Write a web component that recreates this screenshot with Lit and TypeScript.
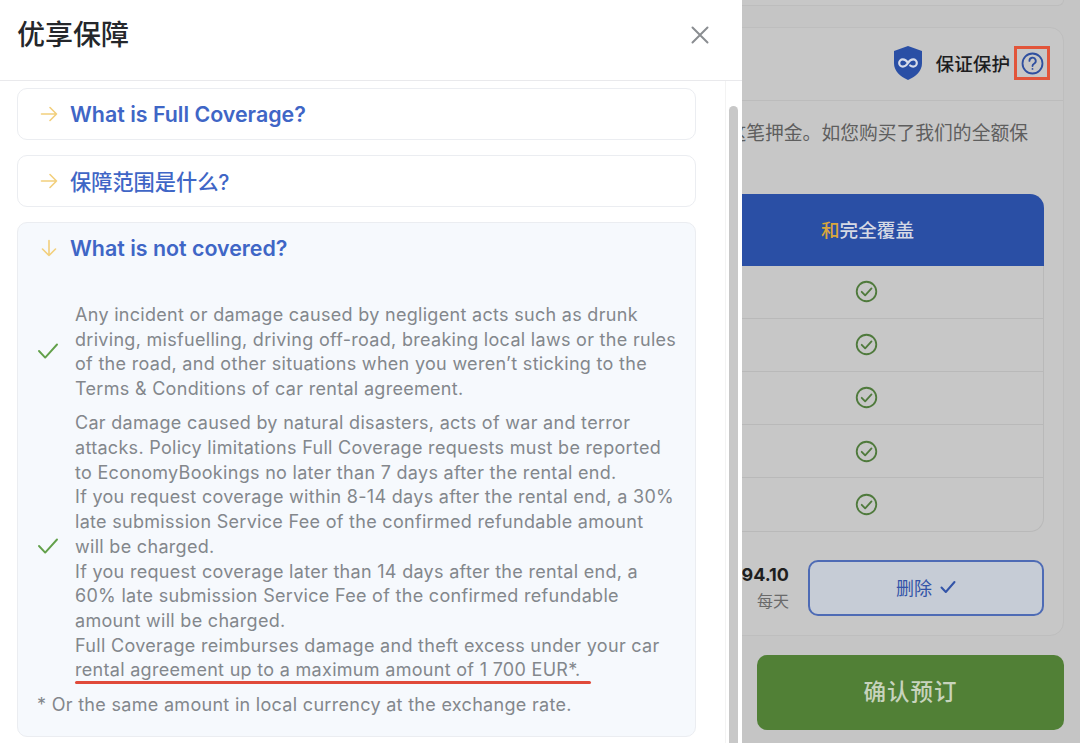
import { LitElement, html, css } from "lit";
import { customElement } from "lit/decorators.js";

const arrowRight = html`<svg class="arrow" viewBox="0 0 18 18" fill="none" stroke="#f2cf7c" stroke-width="1.6" stroke-linecap="round" stroke-linejoin="round"><path d="M1.5 9H16.5M10 2.5 16.5 9 10 15.5"/></svg>`;
const arrowDown = html`<svg class="arrow" viewBox="0 0 18 18" fill="none" stroke="#f2cf7c" stroke-width="1.6" stroke-linecap="round" stroke-linejoin="round"><path d="M9 1.5V16.5M2.5 10 9 16.5 15.5 10"/></svg>`;
const check = html`<svg class="check" viewBox="0 0 20 16" fill="none" stroke="#62a04a" stroke-width="1.9" stroke-linecap="round" stroke-linejoin="round"><path d="M1 8 7.2 14.6 19 1.5"/></svg>`;
const circleCheck = html`<svg class="circle-check" viewBox="0 0 24 24" fill="none" stroke="#4f7a3c" stroke-width="1.9" stroke-linecap="round" stroke-linejoin="round"><circle cx="12" cy="12" r="10.2"/><path d="M7 12.3 10.6 16 17.2 8.8"/></svg>`;

@customElement("app-root")
export class AppRoot extends LitElement {
  static styles = css`
    :host { display: block; width: 1080px; height: 743px; position: relative; overflow: hidden; background: #c5c5c5; font-family: Inter, "Noto Sans CJK SC", sans-serif; }
    * { box-sizing: border-box; }

    /* page behind the drawer */
    .page { width: 1080px; height: 743px; display: flex; flex-direction: column; align-items: flex-end; padding-right: 16px; }
    .top-card { width: 400px; height: 6px; flex: none; border: 1px solid #bdbdbd; border-top: 0; border-radius: 0 0 12px 12px; background: #c7c7c7; }
    .card { width: 400px; height: 609px; flex: none; margin-top: 21px; background: #c7c7c7; border: 1px solid #bebebe; border-radius: 14px; display: flex; flex-direction: column; }
    .card-head { height: 73px; flex: none; border-bottom: 1px solid #bcbcbc; display: flex; align-items: center; justify-content: flex-end; padding: 0 13px 2px 0; }
    .shield { width: 30px; height: 34px; margin-right: 13px; }
    .head-label { font-size: 18.6px; font-weight: 500; color: #1d1d1f; margin: 0 4px 2px 0; }
    .qbox { width: 36px; height: 34px; border: 3px solid #e2553a; display: flex; align-items: center; justify-content: center; }
    .qbox svg { width: 23px; height: 23px; }
    .desc { font-size: 18.8px; color: #5e5e5e; margin-top: 20px; height: 26px; line-height: 26px; white-space: nowrap; text-align: right; padding-right: 35px; overflow: hidden; }
    .table { margin: 47px 19px 0 0; flex: none; }
    .thead { height: 71.5px; background: #2a4fa5; border-radius: 0 14px 0 0; display: flex; align-items: center; justify-content: flex-end; padding: 0 130px 3px 0; font-size: 18.6px; font-weight: 500; color: #d5d9e4; }
    .thead b { color: #d9a63d; font-weight: 500; }
    .rows { border: 1px solid #b9b9b9; border-top: 0; border-radius: 0 0 14px 0; }
    .row { height: 53.2px; display: flex; align-items: center; justify-content: flex-end; padding-right: 165px; border-bottom: 1px solid #b9b9b9; }
    .row:last-child { border-bottom: 0; }
    .circle-check { width: 23px; height: 23px; }
    .price-row { display: flex; justify-content: flex-end; align-items: center; margin: 28px 19px 0 0; gap: 19px; }
    .price { text-align: right; }
    .amount { font-size: 18px; font-weight: 700; color: #1f1f1f; line-height: 26px; }
    .per { font-size: 16px; color: #6a6a6a; line-height: 26px; }
    .remove { width: 236px; height: 56px; border: 2px solid #4e6bb5; border-radius: 10px; background: #c6ccd6; display: flex; align-items: center; justify-content: center; gap: 8px; padding-bottom: 2px; font-size: 18px; color: #3354a8; }
    .remove svg { width: 16px; height: 14px; }
    .confirm { width: 307px; height: 75px; flex: none; margin-top: 19px; padding-bottom: 5px; background: #518036; border-radius: 10px; display: flex; align-items: center; justify-content: center; font-size: 22.5px; font-weight: 500; letter-spacing: 1px; color: #c7d3bd; }

    /* drawer */
    .drawer { position: absolute; left: 0; top: 0; bottom: 0; width: 742px; background: #fff; display: flex; flex-direction: column; }
    .drawer-head { height: 81px; flex: none; border-bottom: 1px solid #e9e9ec; display: flex; align-items: center; justify-content: space-between; padding: 0 33px 14px 17px; }
    .drawer-head h1 { margin: 0; font-size: 28px; font-weight: 500; color: #25272b; }
    .close { width: 18px; height: 18px; display: block; margin-top: 3px; }
    .body { flex: 1; display: flex; min-height: 0; }
    .list { width: 725px; flex: none; padding: 7px 29px 0 17px; display: flex; flex-direction: column; gap: 15px; }
    .item { border: 1px solid #ebedf1; border-radius: 10px; background: #fff; }
    .item.open { background: #f6f9fd; height: 515px; flex: none; }
    .item-head { height: 50px; display: flex; align-items: center; padding-left: 22px; gap: 12px; font-size: 21.4px; font-weight: 600; color: #3f66c6; }
    .item-head.cjk { font-size: 21.2px; font-weight: 500; padding-bottom: 1px; }
    .arrow { width: 18px; height: 18px; flex: none; }
    .entry { display: flex; align-items: center; padding-left: 20px; gap: 17px; font-size: 18px; letter-spacing: 0.3px; line-height: 24.7px; color: #83878c; white-space: nowrap; }
    .entries { margin-top: 30px; display: flex; flex-direction: column; gap: 9.5px; }
    .check { width: 20px; height: 16px; flex: none; margin-bottom: 2px; }
    .mark { position: relative; }
    .mark::after { content: ""; position: absolute; left: 0; right: -10px; bottom: -4px; height: 3px; border-radius: 2px; background: #e04a3a; }
    .note { margin: 9.5px 0 0 19px; font-size: 18px; letter-spacing: 0.3px; line-height: 24.7px; color: #83878c; white-space: nowrap; }
    .track { flex: 1; border-left: 1px solid #f3f3f3; padding: 25px 4px 0 3px; }
    .thumb { height: 100%; background: #c8c8c8; border-radius: 5px 5px 0 0; }
  `;

  render() {
    return html`
      <div class="page">
        <div class="top-card"></div>
        <div class="card">
          <div class="card-head">
            <svg class="shield" viewBox="0 0 30 34"><path d="M15 0 29 5V17C29 25 23 30.5 15 34 7 30.5 1 25 1 17V5Z" fill="#2a4fa5"/><path d="M15 17C13.5 14.6 12 13.4 9.8 13.4A3.6 3.6 0 0 0 9.8 20.6C12 20.6 13.5 19.4 15 17 16.5 14.6 18 13.4 20.2 13.4A3.6 3.6 0 0 1 20.2 20.6C19 20.6 18 20.2 17.2 19.5" fill="none" stroke="#d7dcea" stroke-width="2.2" stroke-linecap="round"/></svg>
            <span class="head-label">保证保护</span>
            <div class="qbox">
              <svg viewBox="0 0 24 24" fill="none" stroke="#2f4f9f" stroke-width="1.9" stroke-linecap="round"><circle cx="12" cy="12" r="10.4"/><path d="M8.8 9.3A3.3 3.3 0 1 1 13.6 12.2C12.6 12.8 12 13.3 12 14.6"/><path d="M12 17.6V17.7"/></svg>
            </div>
          </div>
          <div class="desc">这笔押金。如您购买了我们的全额保</div>
          <div class="table">
            <div class="thead"><span><b>和</b>完全覆盖</span></div>
            <div class="rows">
              ${[0, 1, 2, 3, 4].map(() => html`<div class="row">${circleCheck}</div>`)}
            </div>
          </div>
          <div class="price-row">
            <div class="price"><div class="amount">94.10</div><div class="per">每天</div></div>
            <div class="remove">删除
              <svg viewBox="0 0 16 14" fill="none" stroke="#3354a8" stroke-width="2" stroke-linecap="round" stroke-linejoin="round"><path d="M1.5 7.5 5.8 12 14.5 2"/></svg>
            </div>
          </div>
        </div>
        <div class="confirm">确认预订</div>
      </div>

      <aside class="drawer">
        <header class="drawer-head">
          <h1>优享保障</h1>
          <svg class="close" viewBox="0 0 18 18" fill="none" stroke="#8a8d91" stroke-width="2" stroke-linecap="round"><path d="M1.5 1.5 16.5 16.5M16.5 1.5 1.5 16.5"/></svg>
        </header>
        <div class="body">
          <div class="list">
            <div class="item"><div class="item-head">${arrowRight}What is Full Coverage?</div></div>
            <div class="item"><div class="item-head cjk">${arrowRight}保障范围是什么?</div></div>
            <div class="item open">
              <div class="item-head">${arrowDown}What is not covered?</div>
              <div class="entries">
                <div class="entry">${check}<div>Any incident or damage caused by negligent acts such as drunk<br>driving, misfuelling, driving off-road, breaking local laws or the rules<br>of the road, and other situations when you weren’t sticking to the<br>Terms &amp; Conditions of car rental agreement.</div></div>
                <div class="entry">${check}<div>Car damage caused by natural disasters, acts of war and terror<br>attacks. Policy limitations Full Coverage requests must be reported<br>to EconomyBookings no later than 7 days after the rental end.<br>If you request coverage within 8-14 days after the rental end, a 30%<br>late submission Service Fee of the confirmed refundable amount<br>will be charged.<br>If you request coverage later than 14 days after the rental end, a<br>60% late submission Service Fee of the confirmed refundable<br>amount will be charged.<br>Full Coverage reimburses damage and theft excess under your car<br><span class="mark">rental agreement up to a maximum amount of 1 700 EUR*.</span></div></div>
              </div>
              <div class="note">* Or the same amount in local currency at the exchange rate.</div>
            </div>
          </div>
          <div class="track"><div class="thumb"></div></div>
        </div>
      </aside>
    `;
  }
}
